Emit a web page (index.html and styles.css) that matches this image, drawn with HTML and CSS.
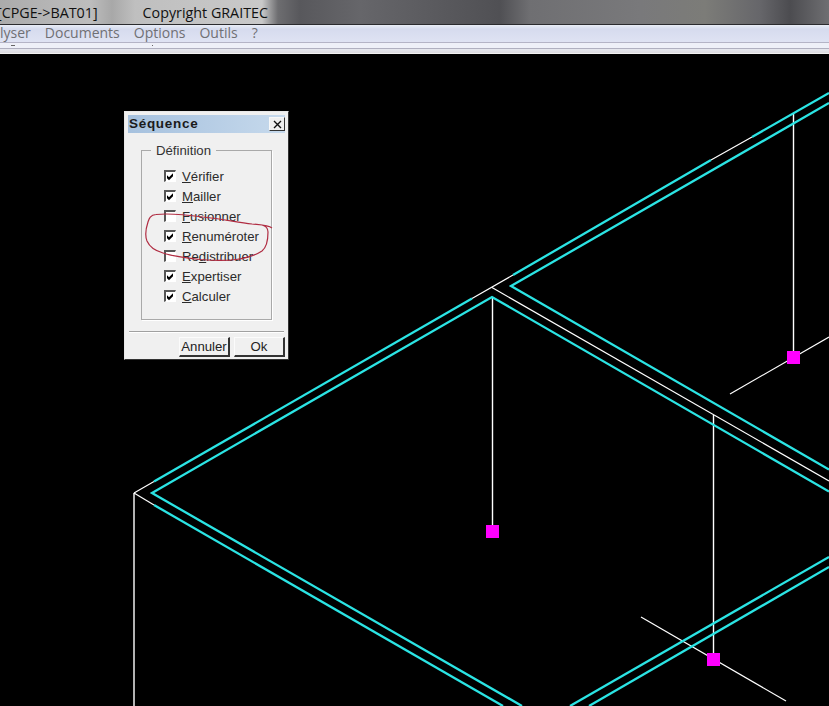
FILE: index.html
```html
<!DOCTYPE html>
<html lang="fr">
<head>
<meta charset="utf-8">
<title>Séquence</title>
<link rel="stylesheet" href="styles.css">
</head>
<body>
<div class="app">
  <header class="titlebar">
    <span class="title-path">[CPGE-&gt;BAT01]</span>
    <span class="title-copy">Copyright GRAITEC</span>
  </header>
  <nav class="menubar">
    <span class="menu-item menu-clipped">lyser</span>
    <span class="menu-item">Documents</span>
    <span class="menu-item">Options</span>
    <span class="menu-item">Outils</span>
    <span class="menu-item">?</span>
  </nav>
  <div class="toolstrip"><span class="tool-mark"></span><span class="tool-mark tool-mark-dot"></span></div>
  <main class="canvas">
    <svg class="drawing" viewBox="0 54 829 652" aria-hidden="true">
      <g class="thin">
        <path d="M134 493L154 481.500M472 298.500L513 275M711 160L752 137"/>
        <path d="M134 493L154 505"/>
        <path d="M492 287.500L829 481"/>
        <path d="M730 394L829 337"/>
        <path d="M641 617L786 701"/>
      </g>
      <g class="post">
        <path d="M134 493V706"/>
        <path d="M492.500 297V526"/>
        <path d="M793.500 113V352"/>
        <path d="M713.500 415V654"/>
      </g>
      <g class="cyan">
        <path d="M154 481.500L472 298.500"/>
        <path d="M513 275L711 160M752 137L829 93"/>
        <path d="M829 103L511 286L829 469.500"/>
        <path d="M522 706L152 493L492 297L829 491.500"/>
        <path d="M154 505L503 706"/>
        <path d="M570 706L829 557"/>
        <path d="M589 706L829 567"/>
      </g>
      <g class="node">
        <rect x="486" y="525" width="13" height="13"/>
        <rect x="787" y="351" width="13" height="13"/>
        <rect x="707" y="653" width="13" height="13"/>
      </g>
    </svg>

    <section class="dialog">
      <div class="dlg-title">
        <span class="dlg-title-text">Séquence</span>
        <span class="dlg-close">
          <svg viewBox="0 0 9 9" width="9" height="9" aria-hidden="true"><path d="M1 1L8 8M8 1L1 8"/></svg>
        </span>
      </div>
      <fieldset class="group">
        <legend class="group-label">Définition</legend>
        <label class="check-row"><span class="check on"></span><span><u>V</u>érifier</span></label>
        <label class="check-row"><span class="check on"></span><span><u>M</u>ailler</span></label>
        <label class="check-row"><span class="check"></span><span><u>F</u>usionner</span></label>
        <label class="check-row"><span class="check on"></span><span><u>R</u>enuméroter</span></label>
        <label class="check-row"><span class="check"></span><span>Re<u>d</u>istribuer</span></label>
        <label class="check-row"><span class="check on"></span><span><u>E</u>xpertiser</span></label>
        <label class="check-row"><span class="check on"></span><span><u>C</u>alculer</span></label>
      </fieldset>
      <div class="dlg-sep"></div>
      <div class="dlg-actions">
        <button class="dlg-btn">Annuler</button>
        <button class="dlg-btn">Ok</button>
      </div>
    </section>

    <svg class="annotation" viewBox="0 54 829 652" aria-hidden="true">
      <path d="M272 228C268 225 262 225 252 224C236 222 222 219 203 217C188 215 170 213 156 214.500C150 215 149 219 148 222C146 228 145 236 147 241C150 248 156 251 163 253C172 256 186 258 200 259.500C212 260.500 226 261 236 259.500C246 258 256 255 262 251C267 247 268 240 268 232C268 228 266 226 262 225"/>
    </svg>
  </main>
</div>
</body>
</html>
```
FILE: styles.css
```css
* { box-sizing: border-box; }
html, body { margin: 0; height: 100%; background: #000; }
.app { width: 829px; height: 706px; display: flex; flex-direction: column; overflow: hidden; }

.titlebar {
  height: 25px;
  flex: none;
  display: flex;
  align-items: center;
  gap: 45px;
  padding-top: 2px;
  font: 14.3px/1 "Open Sans", "Liberation Sans", sans-serif;
  color: #111;
  border-bottom: 1px solid #2b2b2e;
  background: linear-gradient(90deg, #ababab 0, #bdbdbd 90px, #a8a8a8 112px, #bfbfbf 135px, #c9c9c9 262px, #6d6d70 278px, #58585c 300px, #66666a 360px, #505054 500px, #6f6f72 530px, #79797b 640px, #7c7c78 705px, #66666a 760px, #4c4c50 790px, #6f6f72 829px);
}
.title-path { margin-left: -3px; white-space: nowrap; }
.title-copy { white-space: nowrap; }

.menubar {
  height: 18px;
  flex: none;
  display: flex;
  align-items: center;
  gap: 14px;
  padding-bottom: 1px;
  font: 14px/1 "Open Sans", "Liberation Sans", sans-serif;
  color: #707074;
  background: linear-gradient(180deg, #e9edf6 0, #d6dbee 4px, #dfe3f3 100%);
  border-bottom: 1px solid #b4b4c6;
}

.toolstrip {
  height: 11px;
  flex: none;
  display: flex;
  align-items: flex-start;
  padding: 2px 0 0 11px;
  background: linear-gradient(180deg, #eef0f8 0, #eef0f8 5px, #b0b0c0 5px, #b0b0c0 6px, #e6e8ef 6px, #dcdce0 10px, #f2f2f2 10px);
}
.tool-mark { width: 4px; height: 1px; background: #666; }
.tool-mark-dot { width: 1px; margin-left: 137px; }

.canvas { position: relative; flex: 1; background: #000; }
.drawing, .annotation { position: absolute; inset: 0; width: 829px; height: 652px; display: block; }
.annotation { pointer-events: none; }
.annotation path { fill: none; stroke: #b02c42; stroke-width: 1.2; }

.thin path { fill: none; stroke: #fff; stroke-width: 1.2; }
.post path { fill: none; stroke: #fff; stroke-width: 1.4; }
.cyan path { fill: none; stroke: #2be4e4; stroke-width: 2.3; stroke-linejoin: miter; }
.node rect { fill: #ff00ff; }

.dialog {
  position: absolute;
  left: 124px;
  top: 57px;
  width: 165px;
  height: 249px;
  padding: 3px 3px 2px 3px;
  display: flex;
  flex-direction: column;
  background: #f0f0f0;
  border: 1px solid #e8e8e8;
  border-right-color: #333;
  border-bottom-color: #333;
  font: 13.2px/1 "Liberation Sans", Arial, sans-serif;
  color: #222;
}
.dlg-title {
  height: 18px;
  flex: none;
  display: flex;
  align-items: center;
  justify-content: space-between;
  padding: 0 0 0 1px;
  background: linear-gradient(90deg, #a6c1de 0, #c6d9ec 100%);
}
.dlg-title-text { font-weight: bold; font-size: 13.5px; color: #1b1b1b; letter-spacing: .7px; }
.dlg-close {
  width: 16px;
  height: 14px;
  display: flex;
  align-items: center;
  justify-content: center;
  background: #f0f0f0;
  border: 1px solid #f8f8f8;
  border-right-color: #333;
  border-bottom-color: #333;
}
.dlg-close path { fill: none; stroke: #111; stroke-width: 1.4; }

.group {
  margin: 11px 13px 0 13px;
  padding: 9px 0 0 22px;
  height: 176px;
  flex: none;
  border: 1px solid #a9a9a9;
  box-shadow: 1px 1px 0 #fff;
  display: block;
}
.group-label { padding: 0 5px; margin-left: -13px; color: #333; line-height: 1; }
.check-row { display: flex; align-items: center; gap: 6px; height: 20px; color: #2b2b2b; }
.check {
  width: 12px;
  height: 12px;
  flex: none;
  background: #fff;
  border: 1px solid #fff;
  border-top: 2px solid #555;
  border-left: 2px solid #555;
  position: relative;
}
.check.on::after {
  content: "";
  position: absolute;
  inset: 0;
  background: #000;
  clip-path: polygon(1px 3px, 3px 5px, 7px 1px, 7px 4px, 3px 8px, 1px 6px);
}

.dlg-sep { margin: 11px 1px 0 1px; height: 2px; flex: none; border-top: 1px solid #a0a0a0; border-bottom: 1px solid #fff; }
.dlg-actions { display: flex; justify-content: flex-end; gap: 4px; padding: 4px 0 0; }
.dlg-btn {
  width: 51px;
  height: 20px;
  padding: 0;
  font: inherit;
  color: #222;
  background: #f0f0f0;
  border: 1px solid #fbfbfb;
  border-right: 2px solid #333;
  border-bottom: 2px solid #333;
}
```
